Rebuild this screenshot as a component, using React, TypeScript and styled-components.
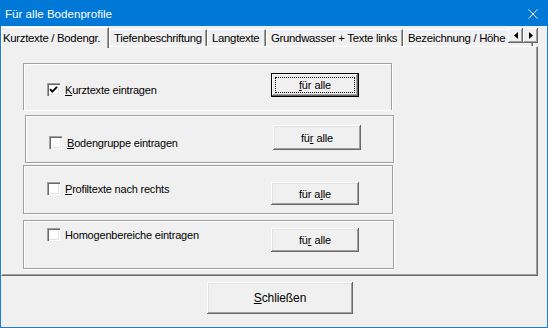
import React from 'react';
import styled, { createGlobalStyle } from 'styled-components';

const GlobalStyle = createGlobalStyle`
  html, body {
    margin: 0;
    padding: 0;
    background: #f0f0f0;
  }
  body {
    width: 548px;
    height: 328px;
    overflow: hidden;
    font-family: "Liberation Sans", Arial, sans-serif;
  }
`;

const Window = styled.div`
  width: 548px;
  height: 328px;
  box-sizing: border-box;
  display: flex;
  flex-direction: column;
  background: #f0f0f0;
  border: 1px solid #1a7fd4;
  border-top: none;
`;

const TitleBar = styled.div`
  flex: none;
  height: 26px;
  margin: 0 -1px;
  padding: 1px 10px 0 5px;
  box-sizing: border-box;
  display: flex;
  align-items: center;
  justify-content: space-between;
  background: #0078d7;
  color: #fff;
  font-size: 11.6px;
`;

const TabControl = styled.div`
  width: 537px;
  display: flex;
  flex-direction: column;
`;

const TabStrip = styled.div`
  position: relative;
  z-index: 1;
  height: 22px;
  margin-bottom: -2px;
  display: flex;
  align-items: flex-end;
  overflow: hidden;
`;

const Tab = styled.div<{ $w: number; $active?: boolean }>`
  flex: none;
  width: ${p => p.$w}px;
  height: ${p => (p.$active ? 21 : 17)}px;
  margin-bottom: ${p => (p.$active ? 0 : 2)}px;
  box-sizing: border-box;
  padding-left: ${p => (p.$active ? 1 : 4)}px;
  display: flex;
  align-items: center;
  background: #f0f0f0;
  border-top: 1px solid #fff;
  border-left: 1px solid #fff;
  border-right: 1px solid #696969;
  box-shadow: inset -1px 0 0 #a0a0a0;
  font-size: 11.4px;
  letter-spacing: -0.3px;
  color: #000;
  white-space: nowrap;
  overflow: hidden;
`;

const ScrollButtons = styled.div`
  position: absolute;
  right: 0;
  top: 2px;
  display: flex;
`;

const ScrollButton = styled.div`
  width: 15px;
  height: 15px;
  box-sizing: border-box;
  display: flex;
  align-items: center;
  justify-content: center;
  background: #f0f0f0;
  box-shadow: inset -1px -1px 0 #696969, inset 1px 1px 0 #fff, inset -2px -2px 0 #a0a0a0;
`;

const Page = styled.div`
  height: 230px;
  box-sizing: border-box;
  border-top: 1px solid #fff;
  border-left: 1px solid #fff;
  border-right: 1px solid #696969;
  border-bottom: 1px solid #696969;
  box-shadow: inset -1px -1px 0 #a0a0a0;
  padding: 16px 0 0 21px;
  display: flex;
  flex-direction: column;
  align-items: flex-start;
`;

const Frame = styled.div<{ $w: number; $h: number; $ml: number; $mt: number; $open?: boolean }>`
  flex: none;
  width: ${p => p.$w}px;
  height: ${p => p.$h}px;
  margin: ${p => p.$mt}px 0 0 ${p => p.$ml}px;
  box-sizing: border-box;
  border: 1px solid #a0a0a0;
  ${p => (p.$open ? 'border-bottom: none;' : '')}
  box-shadow: inset 1px 1px 0 #fff, 1px 1px 0 #fff;
  padding-left: 23px;
  display: flex;
  align-items: flex-start;
`;

const CheckRow = styled.label<{ $mt: number }>`
  width: 224px;
  margin-top: ${p => p.$mt}px;
  display: flex;
  align-items: center;
  gap: 5px;
  font-size: 11px;
  letter-spacing: -0.2px;
  color: #000;
  white-space: nowrap;
`;

const CheckBox = styled.span`
  flex: none;
  width: 13px;
  height: 13px;
  box-sizing: border-box;
  display: flex;
  align-items: center;
  justify-content: center;
  background: #fff;
  box-shadow: inset 1px 1px 0 #a0a0a0, inset 2px 2px 0 #696969, inset -1px -1px 0 #fff, inset -2px -2px 0 #e3e3e3;
`;

const Key = styled.u`
  text-decoration: underline;
  text-underline-offset: 1px;
`;

const PushButton = styled.button<{ $w: number; $h: number; $mt?: number; $default?: boolean; $size?: number }>`
  position: relative;
  flex: none;
  width: ${p => p.$w}px;
  height: ${p => p.$h}px;
  margin-top: ${p => p.$mt ?? 0}px;
  padding: 0;
  box-sizing: border-box;
  background: #f0f0f0;
  border: ${p => (p.$default ? '1px solid #000' : 'none')};
  box-shadow: inset -1px -1px 0 #696969, inset 1px 1px 0 #fff, inset -2px -2px 0 #a0a0a0, inset 2px 2px 0 #e3e3e3;
  font-family: "Liberation Sans", Arial, sans-serif;
  font-size: ${p => p.$size ?? 11}px;
  letter-spacing: -0.1px;
  color: #000;
  cursor: default;

  ${p =>
    p.$default
      ? `&::before {
    content: "";
    position: absolute;
    inset: 3px;
    border: 1px dotted #000;
  }`
      : ''}
`;

const Footer = styled.div`
  flex: 1;
  padding: 6px 0 0 206px;
`;

const tabs = [
  { label: 'Kurztexte / Bodengr.', w: 108, active: true },
  { label: 'Tiefenbeschriftung', w: 98 },
  { label: 'Langtexte', w: 59 },
  { label: 'Grundwasser + Texte links', w: 137 },
  { label: 'Bezeichnung / Höhe', w: 130 },
];

type Row = {
  w: number;
  h: number;
  ml: number;
  mt: number;
  open?: boolean;
  checkTop: number;
  btnTop: number;
  btnH: number;
  checked?: boolean;
  label: React.ReactNode;
  button: React.ReactNode;
  isDefault?: boolean;
};

const rows: Row[] = [
  {
    w: 369, h: 47, ml: 0, mt: 0, open: true, checkTop: 19, btnTop: 9, btnH: 24, checked: true, isDefault: true,
    label: <><Key>K</Key>urztexte eintragen</>,
    button: <><Key>f</Key>ür alle</>,
  },
  {
    w: 369, h: 48, ml: 2, mt: 5, checkTop: 20, btnTop: 9, btnH: 25,
    label: <><Key>B</Key>odengruppe eintragen</>,
    button: <>fü<Key>r</Key> alle</>,
  },
  {
    w: 370, h: 49, ml: 0, mt: 2, checkTop: 16, btnTop: 16, btnH: 23,
    label: <><Key>P</Key>rofiltexte nach rechts</>,
    button: <>für a<Key>l</Key>le</>,
  },
  {
    w: 371, h: 49, ml: 0, mt: 6, checkTop: 7, btnTop: 7, btnH: 24,
    label: <>Homogenbereiche eintragen</>,
    button: <>fü<Key>r</Key> alle</>,
  },
];

export default function App() {
  return (
    <>
      <GlobalStyle />
      <Window>
        <TitleBar>
          <span>Für alle Bodenprofile</span>
          <svg width="10" height="10" viewBox="0 0 10 10">
            <path d="M0.5 0.5 L9.5 9.5 M9.5 0.5 L0.5 9.5" stroke="#fff" strokeWidth="1" fill="none" />
          </svg>
        </TitleBar>
        <TabControl>
          <TabStrip>
            {tabs.map(t => (
              <Tab key={t.label} $w={t.w} $active={t.active}>
                {t.label}
              </Tab>
            ))}
            <ScrollButtons>
              <ScrollButton>
                <svg width="4" height="7" viewBox="0 0 4 7">
                  <path d="M4 0 L0 3.5 L4 7 Z" fill="#000" />
                </svg>
              </ScrollButton>
              <ScrollButton>
                <svg width="4" height="7" viewBox="0 0 4 7">
                  <path d="M0 0 L4 3.5 L0 7 Z" fill="#000" />
                </svg>
              </ScrollButton>
            </ScrollButtons>
          </TabStrip>
          <Page>
            {rows.map((r, i) => (
              <Frame key={i} $w={r.w} $h={r.h} $ml={r.ml} $mt={r.mt} $open={r.open}>
                <CheckRow $mt={r.checkTop}>
                  <CheckBox>
                    {r.checked && (
                      <svg width="9" height="9" viewBox="0 0 9 9">
                        <path d="M1 4.2 L3.3 6.6 L8 1.8" stroke="#000" strokeWidth="1.8" fill="none" />
                      </svg>
                    )}
                  </CheckBox>
                  <span>{r.label}</span>
                </CheckRow>
                <PushButton $w={88} $h={r.btnH} $mt={r.btnTop} $default={r.isDefault}>
                  {r.button}
                </PushButton>
              </Frame>
            ))}
          </Page>
        </TabControl>
        <Footer>
          <PushButton $w={146} $h={32} $size={12}>
            <Key>S</Key>chließen
          </PushButton>
        </Footer>
      </Window>
    </>
  );
}
